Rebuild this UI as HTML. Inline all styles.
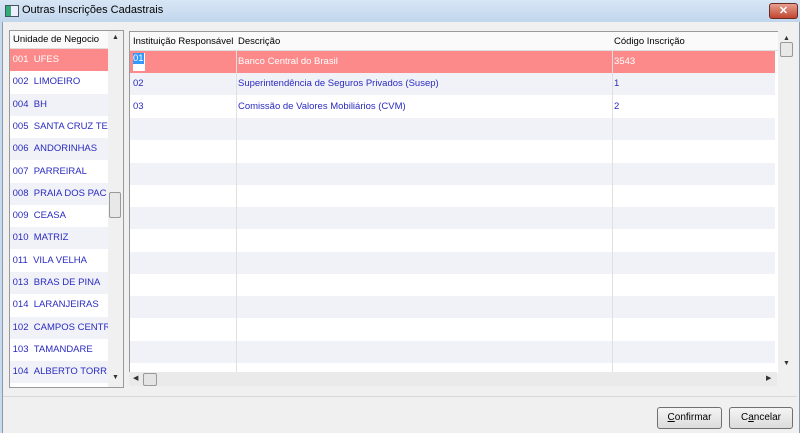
<!DOCTYPE html>
<html><head><meta charset="utf-8"><style>
body{margin:0;width:800px;height:433px;overflow:hidden;font-family:"Liberation Sans",sans-serif;font-size:9.5px;position:relative;background:#c9daee}
.abs{position:absolute}
.win{left:2px;top:22px;width:796px;height:411px;background:#f0f0f0;border-left:1px solid #8a9bb0;border-right:1px solid #8a9bb0}
.row{position:absolute;left:0;right:0;height:22px;line-height:22px;color:#2a2ac0;white-space:nowrap;overflow:hidden}
.alt{background:#f0f2f8}
.sel{background:#fd8a8a;color:#fff}
.btn{position:absolute;top:407px;height:20px;border:1px solid #707070;border-radius:3px;background:linear-gradient(#f4f4f4,#dcdcdc);text-align:center;line-height:19px;font-size:10px;color:#000}
</style></head><body>
<div class="abs" style="left:0;top:0;width:800px;height:22px;background:linear-gradient(#d8e6f5,#c2d6ec)"></div>
<div class="abs" style="left:5px;top:5px;width:12px;height:10px;border:1px solid #456;background:linear-gradient(90deg,#3a7 40%,#eef 40%)"></div>
<div class="abs" style="left:22px;top:4px;font-size:11px;color:#000">Outras Inscrições Cadastrais</div>
<div class="abs" style="left:769px;top:3px;width:27px;height:14px;border:1px solid #6b2b22;border-radius:3px;background:linear-gradient(#e8a090,#c04530);color:#fff;text-align:center;font-size:11px;line-height:14px;font-weight:bold">✕</div>
<div class="abs win"></div>
<!-- left list -->
<div class="abs" style="left:9px;top:30px;width:113px;height:356px;border:1px solid #9a9a9a;background:#fff;overflow:hidden">
 <div class="abs" style="left:0;top:0;width:98px;height:17px;line-height:17px;padding-left:3px;color:#000;background:#fafafa;border-bottom:1px solid #ddd">Unidade de Negocio</div>
 <div class="abs" style="left:0;top:18px;width:98px;height:340px">
  <div class="row sel" style="top:0">&nbsp;001 &nbsp;UFES</div>
  <div class="row" style="top:22.3px">&nbsp;002 &nbsp;LIMOEIRO</div>
  <div class="row alt" style="top:44.6px">&nbsp;004 &nbsp;BH</div>
  <div class="row" style="top:66.9px">&nbsp;005 &nbsp;SANTA CRUZ TE</div>
  <div class="row alt" style="top:89.2px">&nbsp;006 &nbsp;ANDORINHAS</div>
  <div class="row" style="top:111.5px">&nbsp;007 &nbsp;PARREIRAL</div>
  <div class="row alt" style="top:133.8px">&nbsp;008 &nbsp;PRAIA DOS PAC</div>
  <div class="row" style="top:156.1px">&nbsp;009 &nbsp;CEASA</div>
  <div class="row alt" style="top:178.4px">&nbsp;010 &nbsp;MATRIZ</div>
  <div class="row" style="top:200.7px">&nbsp;011 &nbsp;VILA VELHA</div>
  <div class="row alt" style="top:223px">&nbsp;013 &nbsp;BRAS DE PINA</div>
  <div class="row" style="top:245.3px">&nbsp;014 &nbsp;LARANJEIRAS</div>
  <div class="row alt" style="top:267.6px">&nbsp;102 &nbsp;CAMPOS CENTR</div>
  <div class="row" style="top:289.9px">&nbsp;103 &nbsp;TAMANDARE</div>
  <div class="row alt" style="top:312.2px">&nbsp;104 &nbsp;ALBERTO TORR</div>
 </div>
 <div class="abs" style="left:98px;top:0;width:15px;height:356px;background:#f0f0f0">
  <div class="abs" style="left:4px;top:3px;font-size:7px;color:#333">▲</div>
  <div class="abs" style="left:1px;top:161px;width:10px;height:24px;border:1px solid #999;border-radius:2px;background:#e8e8e8"></div>
  <div class="abs" style="left:4px;top:343px;font-size:7px;color:#333">▼</div>
 </div>
</div>
<!-- right grid -->
<div class="abs" style="left:129px;top:31px;width:648px;height:341px;border-left:1px solid #9a9a9a;border-top:1px solid #9a9a9a;background:#fff;overflow:hidden">
 <div class="abs" style="left:0;top:0;width:648px;height:18px;line-height:20px;color:#000;background:#fafafa;border-bottom:1px solid #ddd">
  <span class="abs" style="left:3px">Instituição Responsável</span><span class="abs" style="left:108px">Descrição</span><span class="abs" style="left:484px">Código Inscrição</span></div>
 <div class="abs" style="left:0;top:19px;width:645px;height:330px">
  <div class="row sel" style="top:0"><span class="abs" style="left:3px;top:2px;line-height:12px;background:#fff;color:#3060d0;width:12px;height:18px"><span style="background:#3399ff;color:#fff">01</span></span><span class="abs" style="left:108px">Banco Central do Brasil</span><span class="abs" style="left:484px">3543</span></div>
  <div class="row alt" style="top:22.3px"><span class="abs" style="left:3px">02</span><span class="abs" style="left:108px">Superintendência de Seguros Privados (Susep)</span><span class="abs" style="left:484px">1</span></div>
  <div class="row" style="top:44.6px"><span class="abs" style="left:3px">03</span><span class="abs" style="left:108px">Comissão de Valores Mobiliários (CVM)</span><span class="abs" style="left:484px">2</span></div>
  <div class="row alt" style="top:66.9px"></div><div class="row alt" style="top:111.5px"></div><div class="row alt" style="top:156.1px"></div><div class="row alt" style="top:200.7px"></div><div class="row alt" style="top:245.3px"></div><div class="row alt" style="top:289.9px"></div>
 </div>
 <div class="abs" style="left:106px;top:19px;width:1px;height:330px;background:#e0e0e0"></div>
 <div class="abs" style="left:482px;top:19px;width:1px;height:330px;background:#e0e0e0"></div>
</div>
<!-- horiz scroll -->
<div class="abs" style="left:129px;top:372px;width:648px;height:14px;background:#eaeaea">
 <div class="abs" style="left:4px;top:2px;font-size:7px;color:#333">◀</div>
 <div class="abs" style="left:14px;top:1px;width:12px;height:11px;border:1px solid #999;border-radius:2px;background:#e4e4e4"></div>
 <div class="abs" style="left:637px;top:2px;font-size:7px;color:#333">▶</div>
</div>
<!-- vert scroll -->
<div class="abs" style="left:778px;top:31px;width:16px;height:341px;background:#f0f0f0">
 <div class="abs" style="left:5px;top:4px;font-size:7px;color:#333">▲</div>
 <div class="abs" style="left:2px;top:11px;width:11px;height:13px;border:1px solid #999;border-radius:2px;background:#e8e8e8"></div>
 <div class="abs" style="left:5px;top:329px;font-size:7px;color:#333">▼</div>
</div>
<div class="abs" style="left:3px;top:396px;width:794px;height:1px;background:#d8d8d8"></div>
<div class="btn" style="left:657px;width:63px"><u>C</u>onfirmar</div>
<div class="btn" style="left:729px;width:62px">C<u>a</u>ncelar</div>
</body></html>
